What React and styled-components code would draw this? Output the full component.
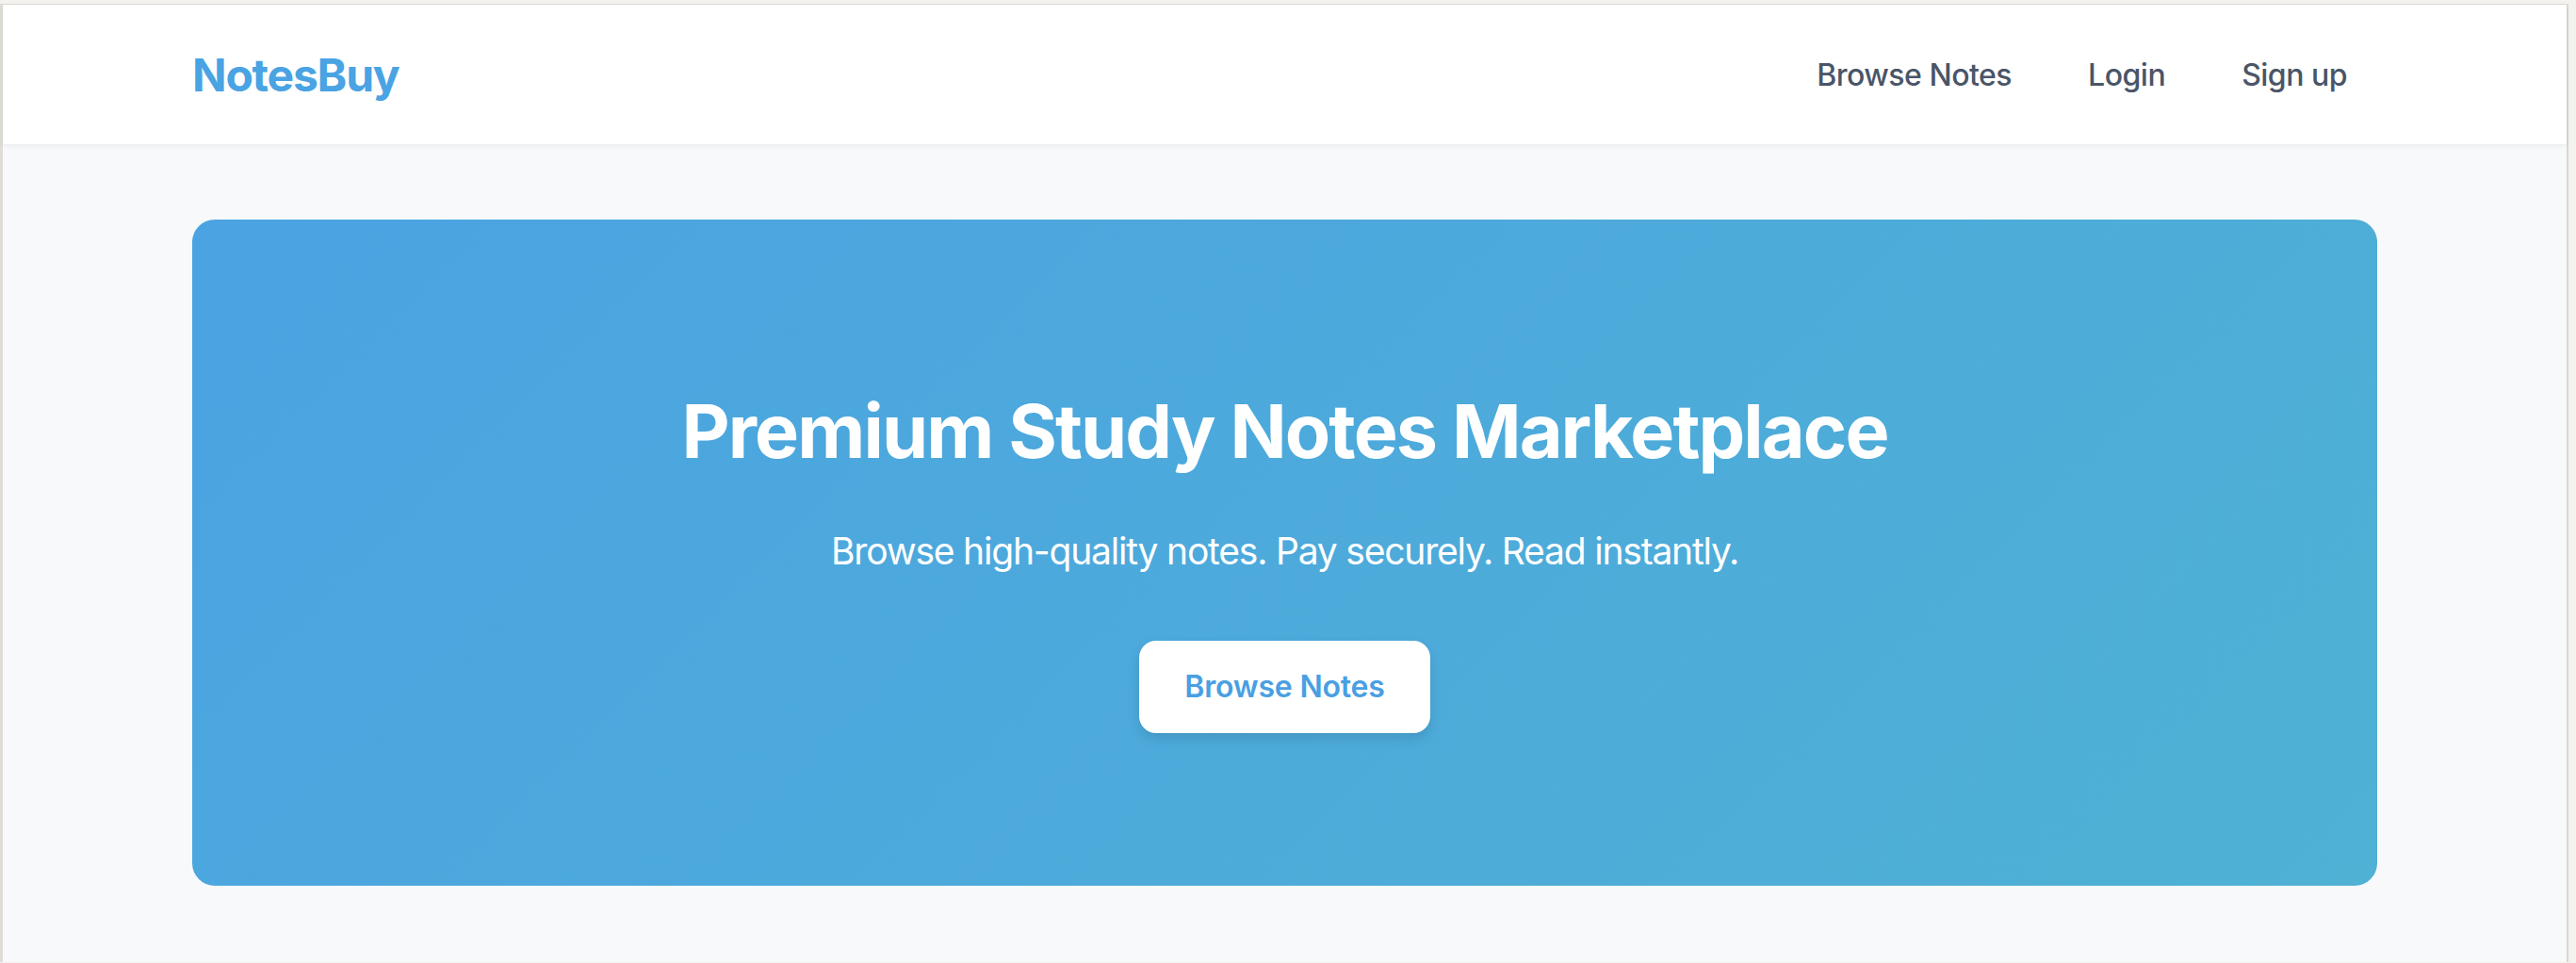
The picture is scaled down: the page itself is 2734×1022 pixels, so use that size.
import styled, { createGlobalStyle } from "styled-components";

const GlobalStyle = createGlobalStyle`
  html, body {
    margin: 0;
    padding: 0;
    background: #f3f2ee;
  }
  body {
    font-family: Inter, "Noto Sans", "Liberation Sans", sans-serif;
    -webkit-font-smoothing: antialiased;
  }
`;

// the browser chrome around the captured page
const Frame = styled.div`
  margin-top: 4px;
  margin-right: 8px;
  border-top: 1px solid #dcdbd5;
  border-left: 3px solid #dddcd5;
  border-right: 2px solid #d9d8d2;
  background: #f8f9fb;
  min-height: 1017px;
  box-sizing: border-box;
`;

const Header = styled.header`
  background: #ffffff;
  height: 148px;
  box-shadow: 0 2px 5px rgba(0, 0, 0, 0.06);
  position: relative;
  z-index: 1;
`;

const Container = styled.div`
  width: 2319px;
  margin: 0 auto;
  box-sizing: border-box;
`;

const HeaderRow = styled(Container)`
  height: 100%;
  display: flex;
  align-items: center;
  justify-content: space-between;
`;

const Logo = styled.a`
  font-size: 48px;
  font-weight: 700;
  color: #4aa3e3;
  text-decoration: none;
  letter-spacing: -1.2px;
`;

const Nav = styled.nav`
  display: flex;
  align-items: center;
  gap: 17px;
`;

const NavLink = styled.a`
  padding: 16px 32px;
  font-size: 32px;
  font-weight: 500;
  color: #4a5568;
  text-decoration: none;
  letter-spacing: -0.5px;
`;

const Main = styled.main`
  padding-top: 80px;
`;

const Hero = styled.section`
  box-sizing: border-box;
  height: 707px;
  border-radius: 24px;
  padding-top: 176px;
  background: linear-gradient(135deg, #4ba3e2 0%, #4fb1d4 100%);
  display: flex;
  flex-direction: column;
  align-items: center;
  color: #ffffff;
  text-align: center;
`;

const Title = styled.h1`
  margin: 0;
  font-size: 79px;
  line-height: 96px;
  font-weight: 700;
  letter-spacing: -1.9px;
`;

const Subtitle = styled.p`
  margin: 50px 0 0;
  font-size: 39px;
  line-height: 60px;
  font-weight: 400;
  letter-spacing: -1.2px;
`;

const CtaButton = styled.a`
  margin-top: 65px;
  padding: 25px 48px;
  line-height: 48px;
  font-size: 32px;
  font-weight: 600;
  color: #4a9fe2;
  background: #ffffff;
  border-radius: 18px;
  text-decoration: none;
  letter-spacing: -0.2px;
  box-shadow: 0 6px 12px rgba(30, 80, 120, 0.22);
`;

const links = ["Browse Notes", "Login", "Sign up"];

export default function App() {
  return (
    <>
      <GlobalStyle />
      <Frame>
        <Header>
          <HeaderRow>
            <Logo href="#">NotesBuy</Logo>
            <Nav>
              {links.map((l) => (
                <NavLink key={l} href="#">
                  {l}
                </NavLink>
              ))}
            </Nav>
          </HeaderRow>
        </Header>
        <Main>
          <Container>
            <Hero>
              <Title>Premium Study Notes Marketplace</Title>
              <Subtitle>Browse high-quality notes. Pay securely. Read instantly.</Subtitle>
              <CtaButton href="#">Browse Notes</CtaButton>
            </Hero>
          </Container>
        </Main>
      </Frame>
    </>
  );
}
